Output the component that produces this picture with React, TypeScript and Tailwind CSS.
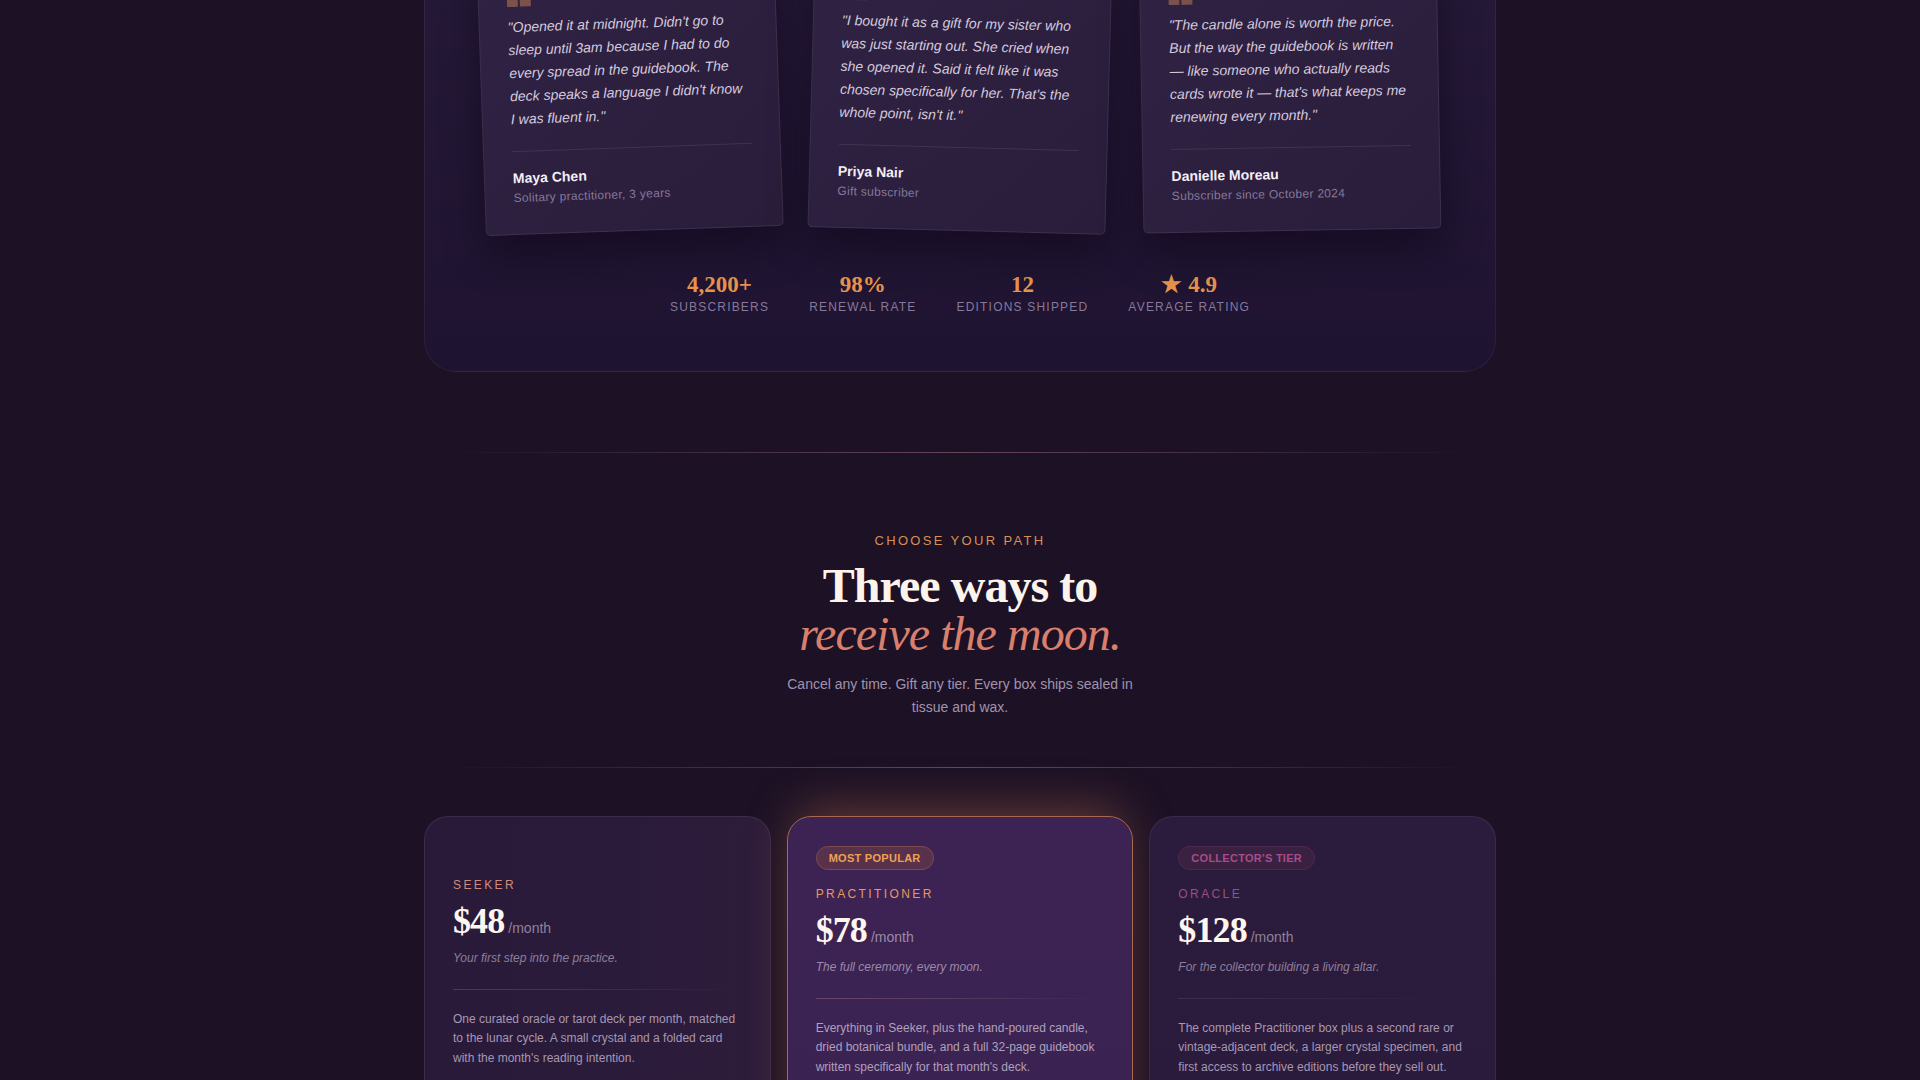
import React from "react";

type Testimonial = { quote: string; name: string; role: string; rot: string };

const testimonials: Testimonial[] = [
  {
    quote:
      "\"Opened it at midnight. Didn't go to sleep until 3am because I had to do every spread in the guidebook. The deck speaks a language I didn't know I was fluent in.\"",
    name: "Maya Chen",
    role: "Solitary practitioner, 3 years",
    rot: "rotate-[-2deg]",
  },
  {
    quote:
      "\"I bought it as a gift for my sister who was just starting out. She cried when she opened it. Said it felt like it was chosen specifically for her. That's the whole point, isn't it.\"",
    name: "Priya Nair",
    role: "Gift subscriber",
    rot: "rotate-[1.5deg]",
  },
  {
    quote:
      "\"The candle alone is worth the price. But the way the guidebook is written — like someone who actually reads cards wrote it — that's what keeps me renewing every month.\"",
    name: "Danielle Moreau",
    role: "Subscriber since October 2024",
    rot: "rotate-[-1deg]",
  },
];

const stats = [
  { value: "4,200+", label: "Subscribers" },
  { value: "98%", label: "Renewal rate" },
  { value: "12", label: "Editions shipped" },
  { value: "★ 4.9", label: "Average rating" },
];

function QuoteMark() {
  return (
    <svg width="26" height="20" viewBox="0 0 26 20" className="mb-[9px] block" aria-hidden="true">
      <path d="M0 20V11C0 5 3 1.5 9 0l1.5 2.5C7 3.8 5.5 6 5.3 9H11v11H0Z" fill="#c9814f" fillOpacity="0.5" />
      <path d="M13 20V11c0-6 3-9.5 9-11l1.5 2.5C20 3.8 18.5 6 18.3 9H24v11H13Z" fill="#c9814f" fillOpacity="0.5" />
    </svg>
  );
}

function TestimonialCard({ t }: { t: Testimonial }) {
  return (
    <div
      className={`${t.rot} rounded-[5px] border border-white/[0.07] bg-linear-to-br from-[#302243] to-[#2a1d3b] p-7 shadow-[0_18px_40px_rgba(8,3,15,0.45)]`}
    >
      <QuoteMark />
      <p className="text-[14px] italic leading-[1.65] text-[#d5cade]">{t.quote}</p>
      <div className="mt-5 border-t border-white/[0.09] pt-4">
        <div className="text-[14px] font-bold leading-5 text-[#f5eef7]">{t.name}</div>
        <div className="mt-0.5 text-[12px] leading-4 tracking-wide text-[#85789a]">{t.role}</div>
      </div>
    </div>
  );
}

function Divider() {
  return <div className="mx-auto h-px w-[1040px] bg-linear-to-r from-transparent via-[#654758] to-transparent" />;
}

export default function App() {
  return (
    <div className="min-h-screen overflow-hidden bg-[#1c1125] font-['Liberation_Sans',Arial,sans-serif]">
      <div className="-mt-[103px] pb-24">
        {/* Testimonials panel */}
        <section className="mx-auto w-[1072px] rounded-[32px] border border-white/[0.06] bg-linear-to-b from-[#271a3a] to-[#1e1330] px-14 pt-14 pb-14">
          <div className="grid grid-cols-3 gap-8">
            {testimonials.map((t) => (
              <TestimonialCard key={t.name} t={t} />
            ))}
          </div>
          <div className="mt-[40px] flex justify-center gap-10">
            {stats.map((s) => (
              <div key={s.label} className="flex flex-col items-center">
                <div className="font-['Liberation_Serif','Times_New_Roman',serif] text-[23px] font-bold leading-7 text-[#e8944c]">
                  {s.value}
                </div>
                <div className="text-[12px] uppercase leading-4 tracking-[0.1em] text-[#86799a]">{s.label}</div>
              </div>
            ))}
          </div>
        </section>

        <div className="mt-[80px]">
          <Divider />
        </div>

        {/* Pricing header */}
        <header className="flex flex-col items-center pt-[78px] pb-[49px] text-center">
          <div className="text-[13px] uppercase leading-5 tracking-[0.18em] text-[#d98f55]">Choose your path</div>
          <h2 className="mt-[11px] font-['Liberation_Serif','Times_New_Roman',serif] text-[48px] leading-[48px] tracking-[-0.02em]">
            <span className="block font-bold text-[#fcf4ea]">Three ways to</span>
            <span className="block italic text-[#d8806d]">receive the moon.</span>
          </h2>
          <p className="mt-[15px] max-w-[360px] text-[14px] leading-[1.6] text-[#a193ad]">
            Cancel any time. Gift any tier. Every box ships sealed in tissue and wax.
          </p>
        </header>

        <Divider />

        {/* Pricing cards */}
        <div className="mx-auto mt-[48px] grid w-[1072px] grid-cols-3 items-start gap-4">
          {/* Seeker */}
          <div className="rounded-3xl border border-white/[0.07] bg-linear-to-r from-[#291a3a] to-[#2d1c3a] p-7">
            <div className="h-[32px]" />
            <div className="text-[12px] uppercase leading-4 tracking-[0.2em] text-[#d08a7c]">Seeker</div>
            <div className="mt-[10px] flex items-baseline gap-1">
              <span className="font-['Liberation_Serif','Times_New_Roman',serif] text-[36px] font-bold leading-none tracking-tight text-[#fdf6ee]">
                $48
              </span>
              <span className="text-[14px] text-[#8f819b]">/month</span>
            </div>
            <div className="mt-[10px] text-[12px] italic leading-[18px] text-[#8d7f9a]">Your first step into the practice.</div>
            <div className="mt-[22px] h-px bg-linear-to-r from-[#4d3a5c] via-[#3e2e4d] to-transparent" />
            <p className="mt-5 text-[12px] leading-[1.6] text-[#a698b2]">
              One curated oracle or tarot deck per month, matched to the lunar cycle. A small crystal and a folded card
              with the month's reading intention.
            </p>
            <ul className="mt-6 space-y-2 text-[12px] text-[#a698b2]">
              <li>✦ 1 curated deck</li>
              <li>✦ Moon-phase crystal</li>
              <li>✦ Intention card</li>
            </ul>
            <button className="mt-8 w-full rounded-full border border-white/10 py-3 text-[13px] text-[#e9dff0]">
              Begin as Seeker
            </button>
          </div>

          {/* Practitioner */}
          <div className="rounded-3xl border border-[#a8674f] bg-linear-to-b from-[#3c2354] to-[#3a2252] p-7 shadow-[0_-14px_50px_-10px_rgba(224,132,80,0.4)]">
            <span className="inline-block rounded-full border border-[#7d4a4d] bg-[#58324a] px-3 py-[3px] text-[11px] font-bold uppercase leading-4 tracking-wide text-[#f0a055]">
              Most popular
            </span>
            <div className="mt-[16px] text-[12px] uppercase leading-4 tracking-[0.2em] text-[#e39a5e]">Practitioner</div>
            <div className="mt-[10px] flex items-baseline gap-1">
              <span className="font-['Liberation_Serif','Times_New_Roman',serif] text-[36px] font-bold leading-none tracking-tight text-[#fdf6ee]">
                $78
              </span>
              <span className="text-[14px] text-[#9b8aa8]">/month</span>
            </div>
            <div className="mt-[10px] text-[12px] italic leading-[18px] text-[#9b8aa8]">The full ceremony, every moon.</div>
            <div className="mt-[22px] h-px bg-linear-to-r from-[#6a4664] via-[#553a5e] to-transparent" />
            <p className="mt-5 text-[12px] leading-[1.6] text-[#b0a0bb]">
              Everything in Seeker, plus the hand-poured candle, dried botanical bundle, and a full 32-page guidebook
              written specifically for that month's deck.
            </p>
            <ul className="mt-6 space-y-2 text-[12px] text-[#b0a0bb]">
              <li>✦ Everything in Seeker</li>
              <li>✦ Hand-poured candle</li>
              <li>✦ 32-page guidebook</li>
            </ul>
            <button className="mt-8 w-full rounded-full bg-[#e39a5e] py-3 text-[13px] font-bold text-[#2a1636]">
              Choose Practitioner
            </button>
          </div>

          {/* Oracle */}
          <div className="rounded-3xl border border-white/[0.07] bg-linear-to-b from-[#2b1b3d] to-[#2a1a3b] p-7">
            <span className="inline-block rounded-full border border-[#4c2a4e] bg-[#3a2142] px-3 py-[3px] text-[11px] font-bold uppercase leading-4 tracking-wide text-[#a84c89]">
              Collector's tier
            </span>
            <div className="mt-[16px] text-[12px] uppercase leading-4 tracking-[0.2em] text-[#9a4f85]">Oracle</div>
            <div className="mt-[10px] flex items-baseline gap-1">
              <span className="font-['Liberation_Serif','Times_New_Roman',serif] text-[36px] font-bold leading-none tracking-tight text-[#fdf6ee]">
                $128
              </span>
              <span className="text-[14px] text-[#8f819b]">/month</span>
            </div>
            <div className="mt-[10px] text-[12px] italic leading-[18px] text-[#8d7f9a]">
              For the collector building a living altar.
            </div>
            <div className="mt-[22px] h-px bg-linear-to-r from-[#3f2d4e] via-[#35263f] to-transparent" />
            <p className="mt-5 text-[12px] leading-[1.6] text-[#a698b2]">
              The complete Practitioner box plus a second rare or vintage-adjacent deck, a larger crystal specimen, and
              first access to archive editions before they sell out.
            </p>
            <ul className="mt-6 space-y-2 text-[12px] text-[#a698b2]">
              <li>✦ Everything in Practitioner</li>
              <li>✦ Second rare deck</li>
              <li>✦ Archive access</li>
            </ul>
            <button className="mt-8 w-full rounded-full border border-white/10 py-3 text-[13px] text-[#e9dff0]">
              Become an Oracle
            </button>
          </div>
        </div>
      </div>
    </div>
  );
}
